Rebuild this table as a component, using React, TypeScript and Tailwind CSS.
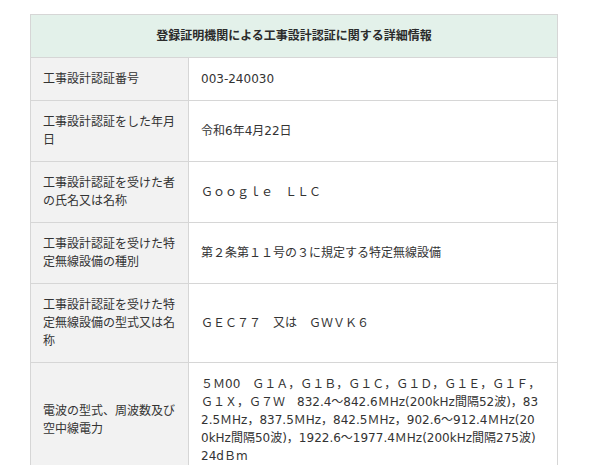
import React from "react";

const font = { fontFamily: '"DejaVu Sans", "Noto Sans CJK JP", sans-serif' };

const rows: { label: string; value: React.ReactNode }[] = [
  { label: "工事設計認証番号", value: "003-240030" },
  { label: "工事設計認証をした年月日", value: "令和6年4月22日" },
  { label: "工事設計認証を受けた者の氏名又は名称", value: "Ｇｏｏｇｌｅ　ＬＬＣ" },
  { label: "工事設計認証を受けた特定無線設備の種別", value: "第２条第１１号の３に規定する特定無線設備" },
  { label: "工事設計認証を受けた特定無線設備の型式又は名称", value: "ＧＥＣ７７　又は　ＧＷＶＫ６" },
  {
    label: "電波の型式、周波数及び空中線電力",
    value: (
      <div className="whitespace-nowrap">
        <div>５Ｍ00　Ｇ１Ａ，Ｇ１Ｂ，Ｇ１Ｃ，Ｇ１Ｄ，Ｇ１Ｅ，Ｇ１Ｆ，</div>
        <div>Ｇ１Ｘ，Ｇ７Ｗ　832.4～842.6ＭHz(200kHz間隔52波)，83</div>
        <div>2.5ＭHz，837.5ＭHz，842.5ＭHz，902.6～912.4ＭHz(20</div>
        <div>0kHz間隔50波)，1922.6～1977.4ＭHz(200kHz間隔275波)</div>
        <div>24dＢm</div>
      </div>
    ),
  },
];

export default function App() {
  return (
    <div className="min-h-[465px] bg-white pl-[30px] pt-[14px]" style={font}>
      <div className="grid w-[528px] grid-cols-[158px_369px] border-l border-t border-[#d6d6d6] text-[12px] leading-[18px] text-[#333333]">
        <div className="col-span-2 border-b border-r border-[#d6d6d6] bg-[#e3f1ea] py-3 text-center font-bold text-[#2b2b2b]">
          登録証明機関による工事設計認証に関する詳細情報
        </div>
        {rows.map((r, i) => (
          <React.Fragment key={i}>
            <div className="flex items-center border-b border-r border-[#d6d6d6] bg-[#f2f2f2] px-3 py-3">
              <span className="break-all">{r.label}</span>
            </div>
            <div className="flex items-center border-b border-r border-[#d6d6d6] bg-white px-3 py-3">
              {r.value}
            </div>
          </React.Fragment>
        ))}
      </div>
    </div>
  );
}
